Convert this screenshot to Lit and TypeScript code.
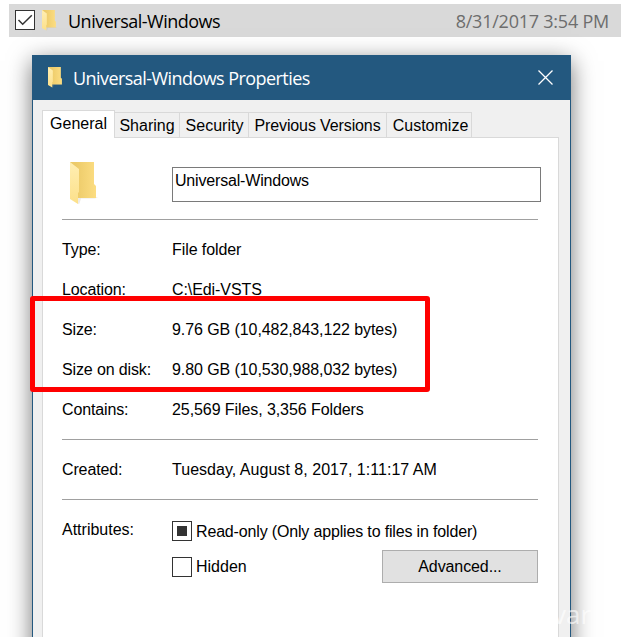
import { LitElement, html, css, svg } from "lit";
import { customElement, property } from "lit/decorators.js";

@customElement("folder-icon")
class FolderIcon extends LitElement {
  static styles = css`
    :host { display: block; }
    svg { display: block; width: 100%; height: 100%; }
  `;
  render() {
    return html`<svg viewBox="0 0 28 43" preserveAspectRatio="none">
      <defs>
        <linearGradient id="b" x1="0" x2="1"><stop offset="0.2" stop-color="#ecca68" /><stop offset="1" stop-color="#fcdd82" /></linearGradient>
        <linearGradient id="f" x1="0" x2="0" y1="0" y2="1"><stop offset="0" stop-color="#ffeeb2" /><stop offset="1" stop-color="#fce08a" /></linearGradient>
      </defs>
      <path d="M8 35H28L25 36.6H11L9.5 41.5L8 42Z" fill="#b0a890" opacity=".22" />
      <path d="M0 0H24V22L26 24V36H6Z" fill="url(#b)" />
      <path d="M0 0L9 7V30L8 31V42L0 37Z" fill="url(#f)" />
    </svg>`;
  }
}

@customElement("check-box")
class CheckBox extends LitElement {
  @property() state = "off";
  static styles = css`
    :host { display: block; box-sizing: border-box; width: 20px; height: 20px; border: 1px solid #333; background: #fff; flex: none; }
    svg { display: block; width: 18px; height: 18px; }
  `;
  render() {
    return html`<svg viewBox="0 0 18 18">
      ${this.state === "mixed" ? svg`<rect x="4" y="4" width="10" height="10" fill="#333" />` : null}
      ${this.state === "on" ? svg`<path d="M2.5 9L6.7 13.3L15.8 4.3" fill="none" stroke="#333" stroke-width="1.5" />` : null}
    </svg>`;
  }
}

const TABS = [["General", 73], ["Sharing", 65], ["Security", 69], ["Previous Versions", 138], ["Customize", 85]] as const;

@customElement("app-root")
class AppRoot extends LitElement {
  static styles = css`
    * { box-sizing: border-box; }
    :host { display: block; position: relative; width: 621px; height: 637px; overflow: hidden; background: #fff; color: #000; font: 16px/20px "Liberation Sans", Arial, sans-serif; white-space: nowrap; }
    .screen { display: flow-root; }
    .file { display: flex; margin: 4px 0 0 9px; height: 33px; padding: 6px 12px 0 6px; background: #d9d9d9; font: 18px/24px "Open Sans", "Noto Sans", sans-serif; }
    .file folder-icon { width: 15px; height: 21px; margin: 0 11px 0 7px; }
    .name { letter-spacing: -0.5px; }
    .file .name { margin-top: -1px; }
    .date { margin: -1px 0 0 auto; color: #6d6d6d; letter-spacing: -0.23px; }
    .dialog { width: 539px; height: 640px; margin: 18px 0 0 32px; border: 1px solid #23587f; border-top: 0; background: #f0f0f0; box-shadow: 0 6px 22px rgba(0,0,0,.55); }
    .title { display: flex; height: 45px; padding: 12px 17px 0 15px; background: #23587f; color: #fff; font: 18px/24px "Open Sans", "Noto Sans", sans-serif; }
    .title folder-icon { width: 15px; height: 21px; margin-right: 10px; }
    .title .name { margin-top: -1px; letter-spacing: -0.56px; }
    .close { width: 15px; height: 15px; margin: 3px 0 0 auto; }
    .tabs { display: flex; align-items: flex-end; margin: 10px 0 0 9px; height: 28px; }
    .tab { height: 26px; border: 1px solid #d9d9d9; border-left: 0; border-bottom: 0; line-height: 25px; text-align: center; flex: none; }
    .tab:nth-child(3) { padding-left: 1px; }
    .tab:nth-child(4) { letter-spacing: -0.12px; }
    .tab:nth-child(5) { padding-left: 3px; }
    .tab.active { height: 28px; background: #fff; border-left: 1px solid #d9d9d9; line-height: 26px; position: relative; }
    .panel { width: 517px; height: 560px; margin: -1px 0 0 9px; padding: 23px 17px 0 19px; border: 1px solid #d9d9d9; background: #fff; }
    .head { display: flex; height: 58px; }
    .head folder-icon { width: 28px; height: 43px; margin: 1px 0 0 8px; }
    .input { width: 369px; height: 35px; margin: 6px 0 0 74px; border: 1px solid #7a7a7a; padding: 3px 2px; letter-spacing: -0.18px; }
    hr { width: 476px; height: 1px; border: 0; margin: 0; background: #a0a0a0; }
    .row { display: grid; grid-template-columns: 110px auto; height: 40px; padding-top: 10px; letter-spacing: -0.08px; }
    .row span:first-child { letter-spacing: -0.13px; }
    .rows { height: 219px; padding-top: 10px; }
    .rows.single { height: 59px; }
    .rows.single .row span:last-child { letter-spacing: 0.03px; }
    .attrs { display: grid; grid-template-columns: 110px 366px; padding-top: 20px; }
    .opt { display: flex; align-items: center; gap: 4px; height: 20px; margin-top: 1px; letter-spacing: -0.16px; }
    .opt span { padding-top: 2px; }
    .line { display: flex; justify-content: space-between; align-items: center; height: 33px; margin-top: 9px; }
    .line .opt { margin: 0; letter-spacing: 0; }
    button { width: 156px; height: 33px; border: 1px solid #adadad; background: #e1e1e1; font: inherit; letter-spacing: -0.1px; color: #000; padding: 0; }
    .mark { position: absolute; left: 30px; top: 296px; width: 400px; height: 96px; border: 5px solid #f00; border-radius: 3px; }
    .water { position: absolute; left: 553px; top: 599px; font: 26px/30px "Open Sans", sans-serif; color: rgba(255,255,255,.65); }
  `;
  row(k: string, v: string) {
    return html`<div class="row"><span>${k}</span><span>${v}</span></div>`;
  }
  render() {
    return html`
      <div class="screen">
        <div class="file"><check-box state="on"></check-box><folder-icon></folder-icon><span class="name">Universal-Windows</span><span class="date">8/31/2017 3:54 PM</span></div>
        <div class="dialog">
          <div class="title"><folder-icon></folder-icon><span class="name">Universal-Windows Properties</span>
            <svg class="close" viewBox="0 0 15 15"><path d="M.5 .5L14.5 14.5M14.5 .5L.5 14.5" stroke="#fff" stroke-width="1.3" /></svg></div>
          <div class="tabs">${TABS.map(([t, w], i) => html`<div class="tab ${i ? "" : "active"}" style="width:${w}px">${t}</div>`)}</div>
          <div class="panel">
            <div class="head"><folder-icon></folder-icon><div class="input">Universal-Windows</div></div>
            <hr />
            <div class="rows">${this.row("Type:", "File folder")}${this.row("Location:", "C:\\Edi-VSTS")}${this.row("Size:", "9.76 GB (10,482,843,122 bytes)")}${this.row("Size on disk:", "9.80 GB (10,530,988,032 bytes)")}${this.row("Contains:", "25,569 Files, 3,356 Folders")}</div>
            <hr />
            <div class="rows single">${this.row("Created:", "Tuesday, August 8, 2017, 1:11:17 AM")}</div>
            <hr />
            <div class="attrs"><span>Attributes:</span><div>
              <div class="opt"><check-box state="mixed"></check-box><span>Read-only (Only applies to files in folder)</span></div>
              <div class="line"><div class="opt"><check-box></check-box>Hidden</div><button>Advanced...</button></div>
            </div></div>
          </div>
        </div>
      </div>
      <div class="mark"></div>
      <div class="water">var</div>`;
  }
}
